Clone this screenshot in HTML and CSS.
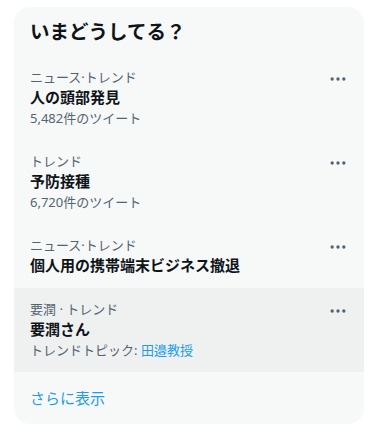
FILE: index.html
```
<!DOCTYPE html>
<html lang="ja">

<head>
    <meta charset="UTF-8">
    <title>いまどうしてる？</title>
    <link rel="stylesheet" href="styles.css">
</head>

<body>
    <div class="card">
        <h2 class="card-title">いまどうしてる？</h2>

        <div class="trend">
            <div class="trend-body">
                <div class="trend-meta">ニュース·トレンド</div>
                <div class="trend-name">人の頭部発見</div>
                <div class="trend-count">5,482件のツイート</div>
            </div>
            <svg class="more" viewBox="0 0 24 24"><circle cx="5" cy="12" r="2"/><circle cx="12" cy="12" r="2"/><circle cx="19" cy="12" r="2"/></svg>
        </div>

        <div class="trend">
            <div class="trend-body">
                <div class="trend-meta">トレンド</div>
                <div class="trend-name">予防接種</div>
                <div class="trend-count">6,720件のツイート</div>
            </div>
            <svg class="more" viewBox="0 0 24 24"><circle cx="5" cy="12" r="2"/><circle cx="12" cy="12" r="2"/><circle cx="19" cy="12" r="2"/></svg>
        </div>

        <div class="trend">
            <div class="trend-body">
                <div class="trend-meta">ニュース·トレンド</div>
                <div class="trend-name">個人用の携帯端末ビジネス撤退</div>
            </div>
            <svg class="more" viewBox="0 0 24 24"><circle cx="5" cy="12" r="2"/><circle cx="12" cy="12" r="2"/><circle cx="19" cy="12" r="2"/></svg>
        </div>

        <div class="trend hover">
            <div class="trend-body">
                <div class="trend-meta">要潤 · トレンド</div>
                <div class="trend-name">要潤さん</div>
                <div class="trend-count">トレンドトピック: <span class="link">田邉教授</span></div>
            </div>
            <svg class="more" viewBox="0 0 24 24"><circle cx="5" cy="12" r="2"/><circle cx="12" cy="12" r="2"/><circle cx="19" cy="12" r="2"/></svg>
        </div>

        <a class="show-more" href="#">さらに表示</a>
    </div>
</body>

</html>
```

FILE: styles.css
```
body {
    margin: 0;
    background: #ffffff;
    font-family: "Noto Sans", "Noto Sans CJK JP", sans-serif;
    color: #0f1419;
}

.card {
    width: 350px;
    margin: 7px 0 0 14px;
    background: #f7f9f9;
    border-radius: 16px;
    overflow: hidden;
}

.card-title {
    margin: 0;
    padding: 12px 16px;
    font-size: 19.5px;
    line-height: 25px;
    font-weight: bold;
    color: #0f1419;
}

.trend {
    display: flex;
    align-items: flex-start;
    padding: 12px 16px;
}

.trend.hover {
    background: #eff1f1;
}

.trend-body {
    flex: 1;
}

.trend-meta {
    font-size: 13px;
    line-height: 19px;
    color: #536471;
}

.trend-name {
    font-size: 15px;
    line-height: 21px;
    font-weight: bold;
    color: #0f1419;
}

.trend-count {
    font-size: 13px;
    line-height: 20px;
    color: #536471;
}

.link {
    color: #1d9bf0;
}

.more {
    width: 20px;
    height: 20px;
    margin-top: 1px;
    fill: #536471;
}

.show-more {
    display: block;
    padding: 16px;
    font-size: 15px;
    line-height: 20px;
    color: #1d9bf0;
    text-decoration: none;
}
```
